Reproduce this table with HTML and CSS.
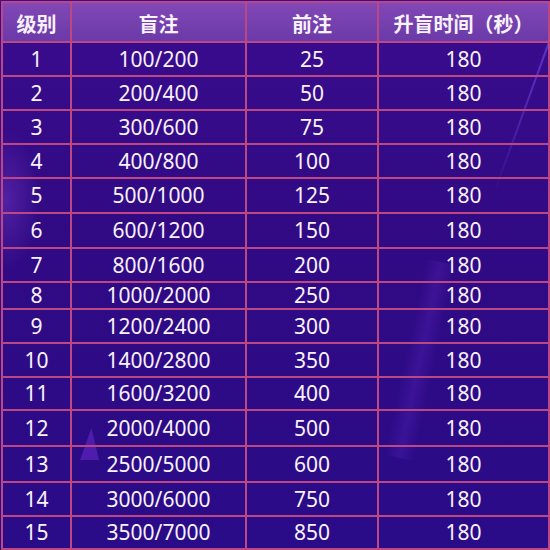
FILE: index.html
```html
<!DOCTYPE html>
<html lang="zh-CN">
<head>
<meta charset="utf-8">
<title>盲注级别表</title>
<link rel="stylesheet" href="styles.css">
</head>
<body>
<div class="stage">
  <div class="streak streak-left"></div>
  <div class="streak streak-right"></div>
  <div class="streak streak-mid"></div>
  <div class="shard"></div>
  <table class="blinds">
    <colgroup>
      <col class="c-level">
      <col class="c-blind">
      <col class="c-ante">
      <col class="c-time">
    </colgroup>
    <thead>
      <tr><th>级别</th><th>盲注</th><th>前注</th><th>升盲时间（秒）</th></tr>
    </thead>
    <tbody>
      <tr><td>1</td><td>100/200</td><td>25</td><td>180</td></tr>
      <tr><td>2</td><td>200/400</td><td>50</td><td>180</td></tr>
      <tr><td>3</td><td>300/600</td><td>75</td><td>180</td></tr>
      <tr><td>4</td><td>400/800</td><td>100</td><td>180</td></tr>
      <tr><td>5</td><td>500/1000</td><td>125</td><td>180</td></tr>
      <tr><td>6</td><td>600/1200</td><td>150</td><td>180</td></tr>
      <tr><td>7</td><td>800/1600</td><td>200</td><td>180</td></tr>
      <tr><td>8</td><td>1000/2000</td><td>250</td><td>180</td></tr>
      <tr><td>9</td><td>1200/2400</td><td>300</td><td>180</td></tr>
      <tr><td>10</td><td>1400/2800</td><td>350</td><td>180</td></tr>
      <tr><td>11</td><td>1600/3200</td><td>400</td><td>180</td></tr>
      <tr><td>12</td><td>2000/4000</td><td>500</td><td>180</td></tr>
      <tr><td>13</td><td>2500/5000</td><td>600</td><td>180</td></tr>
      <tr><td>14</td><td>3000/6000</td><td>750</td><td>180</td></tr>
      <tr><td>15</td><td>3500/7000</td><td>850</td><td>180</td></tr>
    </tbody>
  </table>
</div>
</body>
</html>
```

FILE: styles.css
```css
html, body {
  margin: 0;
  padding: 0;
  background: #2c0a86;
}

.stage {
  position: relative;
  width: 550px;
  height: 550px;
  overflow: hidden;
  background:
    linear-gradient(180deg, #3a0c8e 0%, #310a84 40%, #2a0b88 100%);
  font-family: "Noto Sans", "Noto Sans CJK SC", sans-serif;
  color: #f8f2fb;
}

.streak {
  position: absolute;
  pointer-events: none;
}

.streak-left {
  left: -30px;
  top: 130px;
  width: 70px;
  height: 140px;
  background: radial-gradient(ellipse at center, rgba(120, 60, 200, 0.45) 0%, rgba(120, 60, 200, 0) 70%);
}

.streak-right {
  left: 548px;
  top: 42px;
  width: 2px;
  height: 160px;
  background: linear-gradient(180deg, rgba(120, 80, 240, 0.6) 0%, rgba(120, 80, 240, 0.35) 50%, rgba(120, 80, 240, 0) 100%);
  transform: rotate(20deg);
  transform-origin: top left;
}

.streak-mid {
  left: 405px;
  top: 260px;
  width: 30px;
  height: 200px;
  background: linear-gradient(90deg, rgba(90, 40, 190, 0) 0%, rgba(90, 40, 190, 0.3) 50%, rgba(90, 40, 190, 0) 100%);
  transform: rotate(12deg);
}

.shard {
  left: 80px;
  top: 428px;
  width: 19px;
  height: 32px;
  position: absolute;
  background: rgba(120, 50, 220, 0.45);
  clip-path: polygon(60% 0, 100% 100%, 0 100%);
}

.blinds {
  position: relative;
  margin: 1px 0 0 1px;
  width: 547px;
  table-layout: fixed;
  border-collapse: collapse;
  font-size: 21px;
}

.c-level { width: 69px; }
.c-blind { width: 175px; }
.c-ante  { width: 132px; }
.c-time  { width: 171px; }

.blinds th,
.blinds td {
  border: 2px solid #bc4782;
  text-align: center;
  padding: 0;
  line-height: 1;
}

.blinds thead tr {
  height: 40px;
  background: linear-gradient(180deg, #8248b6 0%, #6a3aa8 100%);
}

.blinds th {
  font-family: "Noto Sans CJK SC", sans-serif;
  font-weight: 700;
  font-size: 20px;
  padding-top: 3px;
}

.blinds tbody tr { height: 34px; }
.blinds tbody tr:nth-child(5),
.blinds tbody tr:nth-child(6) { height: 35px; }
.blinds tbody tr:nth-child(8) { height: 27px; }
.blinds tbody tr:nth-child(11),
.blinds tbody tr:nth-child(15) { height: 33px; }
.blinds tbody tr:nth-child(12),
.blinds tbody tr:nth-child(13) { height: 36px; }

.blinds td {
  font-weight: 400;
}
```
